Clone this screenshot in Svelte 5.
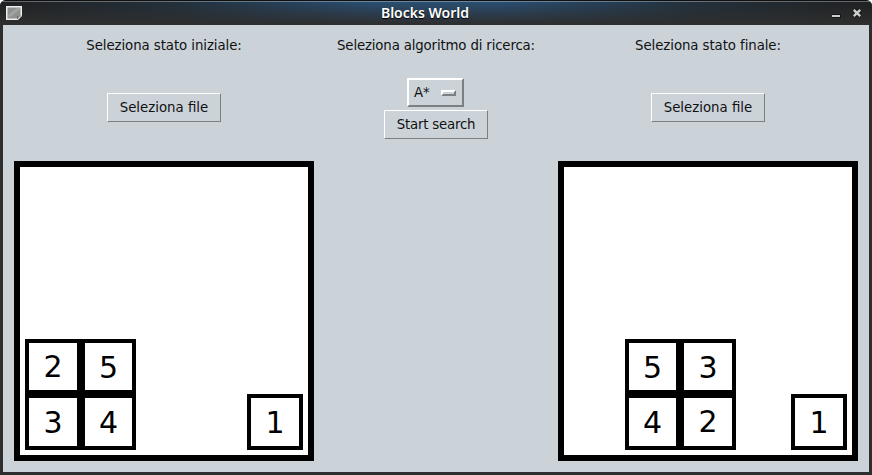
<script>
  const boards = [
    [
      { n: 2, col: 1, row: 4 },
      { n: 5, col: 2, row: 4 },
      { n: 3, col: 1, row: 5 },
      { n: 4, col: 2, row: 5 },
      { n: 1, col: 5, row: 5 }
    ],
    [
      { n: 5, col: 2, row: 4 },
      { n: 3, col: 3, row: 4 },
      { n: 4, col: 2, row: 5 },
      { n: 2, col: 3, row: 5 },
      { n: 1, col: 5, row: 5 }
    ]
  ];
</script>

{#snippet board(blocks)}
  <div class="board">
    {#each blocks as b}
      <div class="block" class:raised={b.n === 2} style="grid-area: {b.row} / {b.col}"><span>{b.n}</span></div>
    {/each}
  </div>
{/snippet}

<div class="window">
  <header>
    <svg class="app" width="16" height="14" viewBox="0 0 16 14">
      <path d="M0 0h16v10l-4 4H0z" fill="#eee" />
      <path d="M1.500 1.500h13v8h-3v3h-10z" fill="#8f918e" />
      <path d="M2 9L11 2h3v1L3 12z" fill="#a2a4a1" />
      <path d="M11 13.500v-4h4.500z" fill="#666861" />
      <path d="M12.500 12v-1.500h2z" fill="#ddd" />
    </svg>
    <h1>Blocks World</h1>
    <svg class="controls" width="30" height="10" viewBox="0 0 30 10">
      <path d="M-1 6h10v4H-1z" fill="#151515" />
      <path d="M0 7h8v2H0z" fill="#ccc" />
      <path d="M21.800 1.800l6.400 6.400M28.200 1.800l-6.400 6.400" stroke="#151515" stroke-width="4.500" />
      <path d="M21.800 1.800l6.400 6.400M28.200 1.800l-6.400 6.400" stroke="#ccc" stroke-width="2.400" />
    </svg>
  </header>
  <main>
    <section class="side">
      <p>Seleziona stato iniziale:</p>
      <button class="file">Seleziona file</button>
      {@render board(boards[0])}
    </section>
    <section class="middle">
      <p>Seleziona algoritmo di ricerca:</p>
      <button class="menu"><span>A*</span><i></i></button>
      <button class="search">Start search</button>
    </section>
    <section class="side">
      <p>Seleziona stato finale:</p>
      <button class="file">Seleziona file</button>
      {@render board(boards[1])}
    </section>
  </main>
</div>

<style>
  :global(body) { margin: 0; background: #fff; }
  .window {
    box-sizing: border-box;
    width: 872px;
    height: 475px;
    padding: 0 3px 3px;
    background: #2e2e2e;
    border-radius: 6px 6px 0 0;
    overflow: hidden;
    font-family: "DejaVu Sans", sans-serif;
    font-size: 13.333px;
    color: #111;
  }
  header {
    box-sizing: border-box;
    height: 25px;
    margin: 0 -3px;
    padding: 0 10px 0 6px;
    display: grid;
    grid-template-columns: 40px 1fr 58px;
    align-items: center;
    border-top: 1px solid #101010;
    background:
      linear-gradient(#ffffff50 1px, transparent 1px),
      linear-gradient(transparent, #2e2e2e 96%),
      linear-gradient(90deg, #1e1f20, #21303c 20%, #294f74 42%, #294f74 58%, #21303c 80%, #1e1f20);
  }
  .app { display: block; }
  .controls { display: block; justify-self: end; }
  h1 {
    margin: 0;
    text-align: center;
    font: 600 14px/24px "Noto Sans", sans-serif;
    color: #fff;
    text-shadow: 0 1px 1px #000;
  }
  main {
    box-sizing: border-box;
    height: 447px;
    padding: 0 11px;
    display: flex;
    background: #cbd3d9;
  }
  section { display: flex; flex-direction: column; align-items: center; }
  .side { width: 300px; }
  .middle { flex: 1; }
  p { margin: 11px 0 0; height: 19px; line-height: 20px; white-space: nowrap; letter-spacing: -0.08px; }
  .middle p { letter-spacing: -0.16px; }
  button {
    box-sizing: border-box;
    padding: 0;
    margin: 0;
    border: 1px solid;
    border-color: #fff #7a7f82 #7a7f82 #fff;
    border-radius: 0;
    background: #cbd3d9;
    font: inherit;
    color: inherit;
    white-space: nowrap;
  }
  .file { width: 114px; height: 29px; margin-top: 38px; }
  .menu {
    width: 57px;
    height: 29px;
    margin: 23px 1px 0 0;
    padding: 0 6px 0 5px;
    border-width: 2px;
    display: flex;
    align-items: center;
    justify-content: space-between;
  }
  .menu i {
    box-sizing: border-box;
    width: 15px;
    height: 6px;
    border: 2px solid;
    border-color: #fff #7a7f82 #7a7f82 #fff;
  }
  .search { width: 104px; height: 29px; margin-top: 3px; letter-spacing: -0.2px; }
  .board {
    box-sizing: border-box;
    width: 300px;
    height: 300px;
    margin-top: 39px;
    border: 6px solid #000;
    padding: 5px;
    background: #fff;
    display: grid;
    grid-template: 56px 55px 56px 55px 56px / 56px 55px 56px 55px 56px;
  }
  .block {
    border: 4px solid #000;
    display: flex;
    justify-content: center;
    font-size: 30px;
    line-height: 50px;
    color: #000;
  }
  .raised { line-height: 48px; }
</style>
